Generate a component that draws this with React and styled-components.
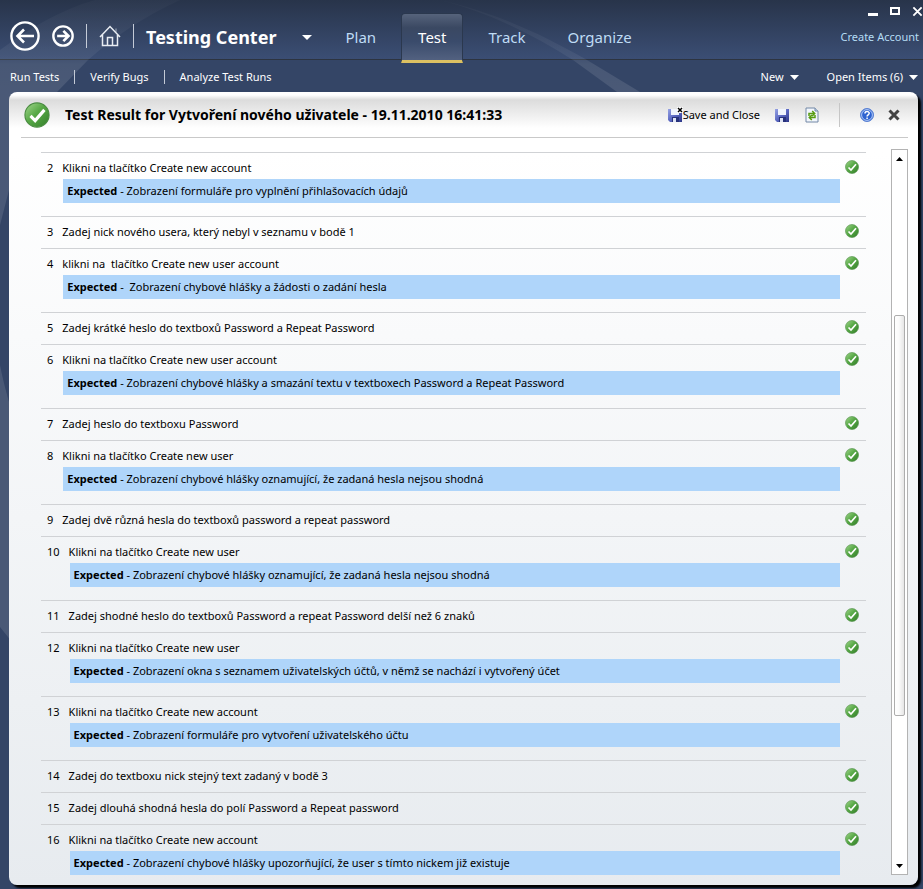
import React from "react";
import styled, { createGlobalStyle } from "styled-components";

const FONT = '"Noto Sans", "Open Sans", sans-serif';

const GlobalStyle = createGlobalStyle`
  * { box-sizing: border-box; }
  body { margin: 0; background: #344566; font-family: ${FONT}; font-size: 11px; line-height: 16px; color: #000; }
  button { font: inherit; color: inherit; background: none; border: 0; padding: 0; margin: 0; cursor: pointer; }
  a { color: inherit; text-decoration: none; }
  svg { display: block; flex: none; }
  h1, p, ol { margin: 0; padding: 0; }
`;

const Window = styled.div`
  position: relative;
  isolation: isolate;
  display: flex;
  flex-direction: column;
  min-height: 100vh;
  background: #344566;
`;

const Backdrop = styled.svg`
  position: absolute;
  top: 0;
  left: 0;
  z-index: 0;
  pointer-events: none;
`;

const Header = styled.header`
  display: flex;
  height: 60px;
  padding-left: 10px;
  border-bottom: 1px solid #2d3440;
  background: linear-gradient(#28344a, #3b4e74);
`;

const Nav = styled.nav`
  position: relative;
  display: flex;
  align-items: center;
  padding-top: 13px;
`;

const RoundButton = styled.button`
  margin-right: ${(p) => p.$gap}px;
`;

const Divider = styled.span`
  width: 1px;
  height: ${(p) => p.$height}px;
  margin: 0 ${(p) => p.$gap}px;
  background: ${(p) => p.$color || "#c3cad6"};
`;

const CenterButton = styled.button`
  display: flex;
  align-items: center;
  gap: 26px;
  padding-top: 2px;
  color: #fff;
  font-size: 18px;
  font-weight: 700;
  line-height: 24px;
`;

const Tabs = styled.div`
  position: relative;
  display: flex;
  align-items: flex-start;
  padding: 13px 0 0 16px;
`;

const Tab = styled.a`
  height: 50px;
  padding: 12px 16px 0;
  border: 1px solid ${(p) => (p.$active ? "#2b384e" : "transparent")};
  border-bottom: ${(p) => (p.$active ? "3px solid #dcc162" : "0")};
  border-radius: 4px 4px 0 0;
  color: ${(p) => (p.$active ? "#fff" : "#bfdcf5")};
  background: ${(p) =>
    p.$active ? "linear-gradient(#56637b, #3a4862 30%, #3a4b6b 60%, #526180)" : "none"};
  margin-right: 8px;
  font-size: 15px;
  line-height: 22px;
`;

const Account = styled.div`
  position: relative;
  display: flex;
  flex-direction: column;
  align-items: flex-end;
  gap: 12px;
  margin-left: auto;
  padding: 6px 0 0;
`;

const WindowControls = styled.div`
  display: flex;
  gap: 12px;
`;

const AccountLink = styled.a`
  padding-right: 4px;
  color: #b5dcf4;
  font-size: 11px;
`;

const SubBar = styled.div`
  position: relative;
  display: flex;
  align-items: center;
  height: 32px;
  padding: 2px 5px 0 10px;
  color: #fff;
`;

const MenuButton = styled.button`
  display: flex;
  align-items: center;
  gap: 6px;
  margin-left: ${(p) => p.$left || "0"};
`;

const Panel = styled.main`
  position: relative;
  flex: 1;
  display: flex;
  flex-direction: column;
  margin: 0 5px 4px 9px;
  padding: 0 10px 10px 12px;
  border-radius: 8px;
  background: linear-gradient(#fff 0, #fff 3px, #dcdcdc 8px, #fff 36px, #fff 60px, #e7ebef 100%);
  box-shadow: 3px 3px 2px #000;
`;

const TitleBar = styled.div`
  display: flex;
  align-items: center;
  height: 46px;
  padding: 0 8px 0 3px;
  border-bottom: 1px solid #c9c9c9;
`;

const Title = styled.h1`
  margin-left: 15px;
  font-size: 14px;
  font-weight: 700;
  line-height: 20px;
`;

const Tools = styled.div`
  display: flex;
  align-items: center;
  margin-left: auto;
`;

const ToolButton = styled.button`
  display: flex;
  align-items: center;
  margin-left: ${(p) => p.$gap || 0}px;
`;

const Body = styled.div`
  flex: 1;
  display: flex;
  gap: 25px;
  padding-top: 11px;
`;

const Steps = styled.ol`
  flex: 1;
  margin: 3px 0 0 20px;
  list-style: none;
`;

const Step = styled.li`
  display: flex;
  align-items: flex-start;
  gap: 5px;
  padding: 0 7px 0 6px;
  border-top: 1px solid #d0d2d5;
  min-height: 32px;
`;

const StepNumber = styled.span`
  padding-top: 7px;
  margin-right: 4px;
`;

const StepContent = styled.div`
  flex: 1;
  padding-bottom: ${(p) => (p.$spaced ? "13px" : "0")};
  white-space: pre-wrap;
`;

const Action = styled.p`
  padding: 7px 0 3px;
`;

const Expected = styled.p`
  padding: 4px;
  margin-left: 1px;
  background: #afd5fa;
`;

const StepState = styled.span`
  padding-top: 7px;
`;

const ScrollTrack = styled.div`
  display: flex;
  flex-direction: column;
  width: 17px;
  border: 1px solid #b3b3b3;
  background: #fff;
`;

const ScrollButton = styled.button`
  display: flex;
  justify-content: center;
  align-items: center;
  height: 17px;
`;

const ScrollSpace = styled.div`
  flex: ${(p) => p.$share};
`;

const ScrollThumb = styled.div`
  flex: 401;
  margin: 0 2px;
  border: 1px solid #adadad;
  border-radius: 2px;
  background: linear-gradient(90deg, #fff, #fafafa 45%, #e6e6e6);
`;

const steps = [
  [2, "Klikni na tlačítko Create new account", "Zobrazení formuláře pro vyplnění přihlašovacích údajů"],
  [3, "Zadej nick nového usera, který nebyl v seznamu v bodě 1"],
  [4, "klikni na  tlačítko Create new user account", " Zobrazení chybové hlášky a žádosti o zadání hesla"],
  [5, "Zadej krátké heslo do textboxů Password a Repeat Password"],
  [6, "Klikni na tlačítko Create new user account", "Zobrazení chybové hlášky a smazání textu v textboxech Password a Repeat Password"],
  [7, "Zadej heslo do textboxu Password"],
  [8, "Klikni na tlačítko Create new user", "Zobrazení chybové hlášky oznamující, že zadaná hesla nejsou shodná"],
  [9, "Zadej dvě různá hesla do textboxů password a repeat password"],
  [10, "Klikni na tlačítko Create new user", "Zobrazení chybové hlášky oznamující, že zadaná hesla nejsou shodná"],
  [11, "Zadej shodné heslo do textboxů Password a repeat Password delší než 6 znaků"],
  [12, "Klikni na tlačítko Create new user", "Zobrazení okna s seznamem uživatelských účtů, v němž se nachází i vytvořený účet"],
  [13, "Klikni na tlačítko Create new account", "Zobrazení formuláře pro vytvoření uživatelského účtu"],
  [14, "Zadej do textboxu nick stejný text zadaný v bodě 3"],
  [15, "Zadej dlouhá shodná hesla do polí Password a Repeat password"],
  [16, "Klikni na tlačítko Create new account", "Zobrazení chybové hlášky upozorňující, že user s tímto nickem již existuje"],
];

const Swoosh = () => (
  <Backdrop width="660" height="650" aria-hidden="true">
    <defs>
      <linearGradient id="fade" gradientUnits="userSpaceOnUse" x1="0" y1="0" x2="0" y2="92">
        <stop offset="0" stopColor="#fff" stopOpacity="0.02" />
        <stop offset="0.62" stopColor="#fff" stopOpacity="0.06" />
        <stop offset="0.7" stopColor="#fff" stopOpacity="0.1" />
        <stop offset="1" stopColor="#fff" stopOpacity="0.11" />
      </linearGradient>
    </defs>
    <path d="M0 50C30 28 60 10 95 0H180C145 16 115 36 88 60L57 92C35 120 18 155 9 190L0 225Z" fill="url(#fade)" />
    <path d="M0 365Q4 386 12 412V642L0 627Z" fill="#fff" opacity="0.11" />
    <path d="M440 0C500 14 545 36 587 60L640 92H617L573 60C530 33 490 13 440 0Z" fill="url(#fade)" />
  </Backdrop>
);

const Arrow = ({ size, flip }) => (
  <svg width={size} height={size} viewBox="0 0 30 30" fill="none" stroke="#fff" strokeWidth={flip ? 3.2 : 2.4}>
    <circle cx="15" cy="15" r={flip ? 13.2 : 13.6} />
    <path
      d={flip ? "M7 15H22M15.5 8L22.5 15L15.5 22" : "M24 15H8M14 8.5L7.5 15L14 21.5"}
      strokeWidth={flip ? 3.6 : 2.6}
    />
  </svg>
);

const Home = () => (
  <svg width="22" height="22" viewBox="0 0 22 22" fill="none" stroke="#e8ecf2" strokeWidth="1.5">
    <path d="M1 12L11 1.5L21 12M3.5 10V20.5H18.5V10M8.5 20V12.5H13.5V20" />
    <path d="M17 3.5V7" strokeWidth="1" opacity="0.6" />
  </svg>
);

const Caret = ({ w = 9, h = 5, color = "#fff", up }) => (
  <svg width={w} height={h} viewBox="0 0 10 6" preserveAspectRatio="none" fill={color}>
    <path d={up ? "M0 6L5 0L10 6Z" : "M0 0H10L5 6Z"} />
  </svg>
);

const Check = ({ size, id }) => (
  <svg width={size} height={size} viewBox="0 0 28 28" role="img" aria-label="Passed">
    <defs>
      <linearGradient id={id} x1="0" y1="0" x2="1" y2="1">
        <stop offset="0" stopColor="#a4d88f" />
        <stop offset="0.45" stopColor="#58a947" />
        <stop offset="1" stopColor="#337f29" />
      </linearGradient>
    </defs>
    <circle cx="14" cy="14" r="13" fill={`url(#${id})`} stroke="#4a8c41" strokeWidth="1.2" />
    <path d="M7 15L12 20L22 8.5" fill="none" stroke="#fff" strokeWidth="3.4" />
  </svg>
);

const Disk = ({ close }) => (
  <svg width="16" height="16" viewBox="0 0 16 16">
    <defs>
      <linearGradient id={close ? "disk-close" : "disk"} x1="0" y1="0" x2="1" y2="1">
        <stop offset="0" stopColor="#98a4e4" />
        <stop offset="0.5" stopColor="#5b68c2" />
        <stop offset="1" stopColor="#2c3688" />
      </linearGradient>
    </defs>
    <path d="M1 2H15V15H3L1 13Z" fill={`url(#${close ? "disk-close" : "disk"})`} />
    <path d="M4 2H12V8H4Z" fill="#f0f4fd" />
    <path d="M5 10H12V15H5Z" fill="#27327b" />
    <path d="M6 11H9V15H6Z" fill="#dfe4f5" />
    {close && <path d="M10 0H16V6H10Z" fill="#fff" />}
    {close && <path d="M11 1L15 5M15 1L11 5" stroke="#000" strokeWidth="1.5" />}
  </svg>
);

const Refresh = () => (
  <svg width="14" height="16" viewBox="0 0 14 16" fill="none">
    <path d="M1 1H10L13 4V15H1Z" fill="#f2f6fc" stroke="#7388a6" />
    <path d="M10 1V4H13" fill="#c4d3e8" stroke="#7388a6" />
    <path d="M4 9V6.5H9M7.2 4L9.7 6.5L7.2 9M10 8V10.5H5M6.8 8L4.3 10.5L6.8 13" stroke="#579c12" strokeWidth="1.5" />
  </svg>
);

const Help = () => (
  <svg width="14" height="14" viewBox="0 0 14 14" fill="none">
    <circle cx="7" cy="7" r="6.5" fill="#2e63d0" stroke="#5b82d2" />
    <circle cx="7" cy="7" r="5.4" stroke="#c4d7fa" strokeWidth="0.9" />
    <path d="M5 5.5C5 3 9.2 3 9.2 5.3C9.2 6.9 7.1 6.8 7.1 8.5M7.1 9.5V11" stroke="#fff" strokeWidth="1.5" />
  </svg>
);

const Cross = ({ size, color, weight }) => (
  <svg width={size} height={size} viewBox="0 0 12 12" stroke={color} strokeWidth={weight}>
    <path d="M1.5 1.5L10.5 10.5M10.5 1.5L1.5 10.5" />
  </svg>
);

export default function App() {
  return (
    <Window>
      <GlobalStyle />
      <Header>
        <Nav aria-label="Main">
          <RoundButton $gap={12} aria-label="Back"><Arrow size={30} /></RoundButton>
          <RoundButton $gap={0} aria-label="Forward"><Arrow size={22} flip /></RoundButton>
          <Divider $height={24} $gap={12} />
          <RoundButton $gap={0} aria-label="Home"><Home /></RoundButton>
          <Divider $height={24} $gap={12} />
          <CenterButton>Testing Center<Caret w={10} h={5} /></CenterButton>
        </Nav>
        <Tabs>
          <Tab href="#plan">Plan</Tab>
          <Tab href="#test" $active aria-current="page">Test</Tab>
          <Tab href="#track">Track</Tab>
          <Tab href="#organize">Organize</Tab>
        </Tabs>
        <Account>
          <WindowControls>
            <button aria-label="Minimize">
              <svg width="10" height="11"><path d="M0 7H10V10H0Z" fill="#fff" /></svg>
            </button>
            <button aria-label="Maximize">
              <svg width="10" height="11"><path d="M1 2H9V8H1Z" fill="none" stroke="#fff" strokeWidth="2" /></svg>
            </button>
            <button aria-label="Close window"><Cross size={11} color="#fff" weight={2} /></button>
          </WindowControls>
          <AccountLink href="#account">Create Account</AccountLink>
        </Account>
      </Header>
      <Swoosh />
      <SubBar>
        <a href="#run">Run Tests</a>
        <Divider $height={14} $gap={15} />
        <a href="#verify">Verify Bugs</a>
        <Divider $height={14} $gap={15} />
        <a href="#analyze">Analyze Test Runs</a>
        <MenuButton $left="auto">New<Caret /></MenuButton>
        <MenuButton $left="28px">Open Items (6)<Caret /></MenuButton>
      </SubBar>
      <Panel>
        <TitleBar>
          <Check size={26} id="title-check" />
          <Title>Test Result for Vytvoření nového uživatele - 19.11.2010 16:41:33</Title>
          <Tools>
            <ToolButton><Disk close />Save and Close</ToolButton>
            <ToolButton $gap={14} aria-label="Save"><Disk /></ToolButton>
            <ToolButton $gap={15} aria-label="Refresh"><Refresh /></ToolButton>
            <Divider $height={24} $gap={20} $color="#c6c6c6" />
            <ToolButton aria-label="Help"><Help /></ToolButton>
            <ToolButton $gap={14} aria-label="Close"><Cross size={12} color="#444" weight={3} /></ToolButton>
          </Tools>
        </TitleBar>
        <Body>
          <Steps>
            {steps.map(([n, action, expected], i) => (
              <Step key={n}>
                <StepNumber>{n}</StepNumber>
                <StepContent $spaced={expected && i < steps.length - 1}>
                  <Action>{action}</Action>
                  {expected && <Expected><b>Expected</b> - {expected}</Expected>}
                </StepContent>
                <StepState><Check size={14} id={`check-${n}`} /></StepState>
              </Step>
            ))}
          </Steps>
          <ScrollTrack>
            <ScrollButton aria-label="Scroll up"><Caret w={7} h={4} color="#000" up /></ScrollButton>
            <ScrollSpace $share={148} />
            <ScrollThumb />
            <ScrollSpace $share={141} />
            <ScrollButton aria-label="Scroll down"><Caret w={7} h={4} color="#000" /></ScrollButton>
          </ScrollTrack>
        </Body>
      </Panel>
    </Window>
  );
}
